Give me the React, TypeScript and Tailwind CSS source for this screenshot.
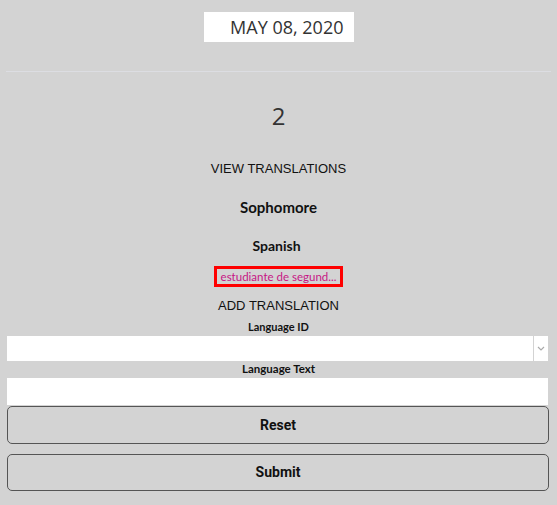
import React from "react";

export default function App() {
  const rounded = { fontFamily: "Lato, 'Noto Sans', sans-serif" } as React.CSSProperties;
  return (
    <div className="min-h-[505px] w-full bg-[#d3d3d3] flex flex-col" style={{ fontFamily: "'Liberation Sans', Arial, sans-serif" }}>
      <div className="pt-[12px] flex justify-center">
        <div className="h-[30px] w-[150px] bg-white flex items-center justify-end pr-[10px] text-[18px] text-[#333] font-['Open_Sans',sans-serif]">
          MAY 08, 2020
        </div>
      </div>
      <div className="mt-[29px] mx-[6px] h-px bg-[#dcdde2]" />
      <div className="mt-[28px] h-[32px] leading-[32px] text-center text-[24px] text-[#333] font-['Open_Sans',sans-serif]">2</div>
      <div className="mt-[27px] h-[20px] leading-[20px] text-center text-[13px] text-[#111]">VIEW TRANSLATIONS</div>
      <div className="mt-[18px] h-[20px] leading-[20px] text-center text-[15px] font-bold text-[#111]" style={rounded}>Sophomore</div>
      <div className="mt-[19px] h-[20px] leading-[20px] text-center text-[14px] font-bold text-[#111] pr-[4px]" style={rounded}>Spanish</div>
      <div className="mt-[10px] flex justify-center">
        <div className="h-[21px] px-[4px] pt-px border-[3px] border-[#ff0000] flex items-center justify-center whitespace-nowrap text-[11.5px] text-[#c71585] leading-none" style={rounded}>
          estudiante de segund...
        </div>
      </div>
      <div className="mt-[9px] h-[20px] leading-[20px] text-center text-[13px] text-[#111]">ADD TRANSLATION</div>
      <div className="mt-[4px] h-[14px] leading-[14px] text-center text-[11px] font-bold text-[#111]" style={rounded}>Language ID</div>
      <div className="mt-[2px] ml-[7px] mr-[9px] h-[25px] bg-white flex">
        <div className="flex-1" />
        <div className="w-[15px] border-l border-[#d3d3d3] flex items-center justify-center">
          <svg width="8" height="5" viewBox="0 0 8 5"><path d="M1 1 L4 4 L7 1" stroke="#aaa" strokeWidth="1.2" fill="none" /></svg>
        </div>
      </div>
      <div className="mt-[1px] h-[14px] leading-[14px] text-center text-[11.5px] font-bold text-[#111]" style={rounded}>Language Text</div>
      <div className="mt-[2px] ml-[7px] mr-[9px] h-[27px] bg-white" />
      <button className="mt-[1px] ml-[7px] mr-[8px] h-[38px] rounded-[5px] border border-[#555] bg-[#d3d3d3] text-[14px] font-bold text-[#111] font-['Roboto',sans-serif]">Reset</button>
      <button className="mt-[10px] ml-[7px] mr-[8px] h-[37px] rounded-[5px] border border-[#555] bg-[#d3d3d3] text-[14px] font-bold text-[#111] font-['Roboto',sans-serif]">Submit</button>
    </div>
  );
}
